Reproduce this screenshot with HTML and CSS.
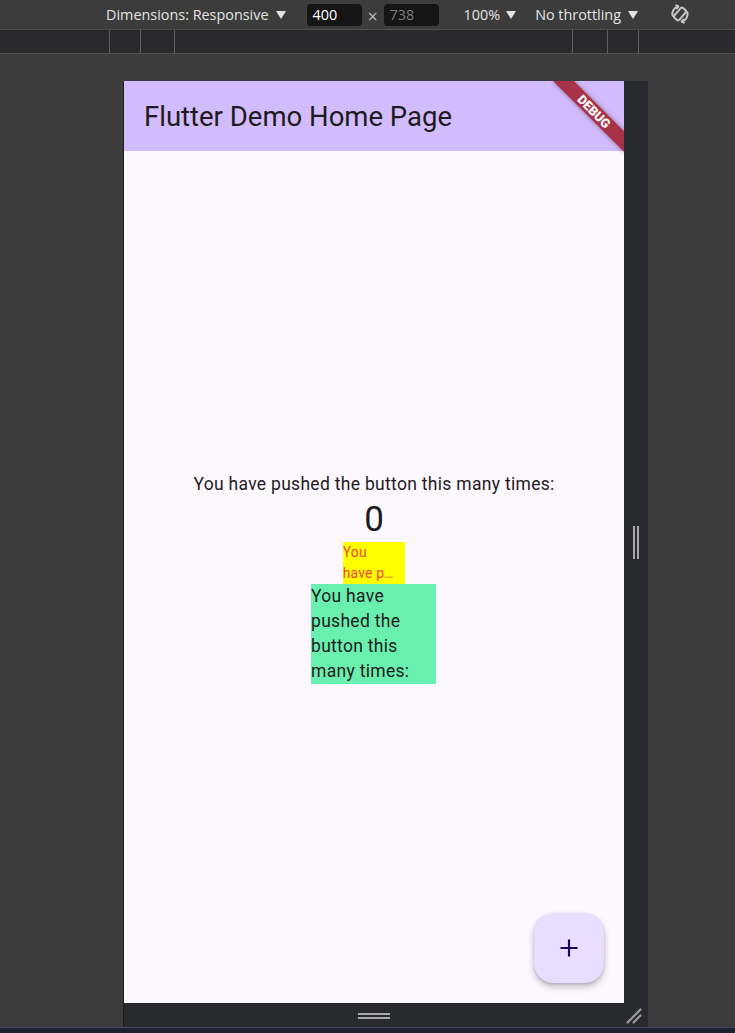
FILE: index.html
```html
<!DOCTYPE html>
<html lang="en">
<head>
<meta charset="utf-8">
<title>Flutter Demo Home Page</title>
<link rel="stylesheet" href="styles.css">
</head>
<body>
<div class="page">
  <div class="toolbar">
    <span class="tb-label">Dimensions: Responsive</span><span class="caret"></span>
    <span class="tb-input tb-w">400</span>
    <span class="times">×</span>
    <span class="tb-input tb-h">738</span>
    <span class="tb-label zoom">100%</span><span class="caret c-zoom"></span>
    <span class="tb-label throttle">No throttling</span><span class="caret"></span>
    <svg class="rotate" width="24" height="24" viewBox="0 0 24 24" fill="none" stroke="#c8c8c8" stroke-width="2" stroke-linecap="round">
      <rect x="8.7" y="5.5" width="6.6" height="13" rx="1.8" transform="rotate(40 12 12)"/>
      <path d="M4.6 13.8 A7.6 7.6 0 0 1 10.2 4.5"/>
      <path d="M10.2 4.5 L8.3 3.3 M10.2 4.5 L9 6.3"/>
      <path d="M19.4 10.2 A7.6 7.6 0 0 1 13.8 19.5"/>
      <path d="M13.8 19.5 L15.7 20.7 M13.8 19.5 L15 17.7"/>
    </svg>
  </div>
  <div class="rulers">
    <div class="r-seg r-a"></div>
    <div class="r-seg r-b"></div>
    <div class="r-seg r-c"></div>
    <div class="r-seg r-d"></div>
    <div class="r-seg r-e"></div>
    <div class="r-seg r-f"></div>
  </div>
  <div class="stage">
    <div class="device">
      <div class="screen">
        <header class="appbar">
          <h1 class="title">Flutter Demo Home Page</h1>
        </header>
        <main class="body">
          <p class="msg">You have pushed the button this many times:</p>
          <p class="counter">0</p>
          <div class="yellow"><span class="yl">You</span><span class="yl">have p…</span></div>
          <div class="green">You have pushed the button this many times:</div>
        </main>
        <button class="fab" aria-label="Increment">
          <svg width="30" height="30" viewBox="0 0 30 30"><path d="M15 6.5 V23.5 M6.5 15 H23.5" stroke="#21005d" stroke-width="2.2"/></svg>
        </button>
        <div class="banner"><span>DEBUG</span></div>
      </div>
      <div class="gutter-right"><span class="vbar"></span><span class="vbar"></span></div>
      <div class="gutter-bottom"><span class="hbar"></span><span class="hbar"></span></div>
      <div class="corner">
        <svg width="24" height="24" viewBox="0 0 24 24"><path d="M3.5 19.5 L16.5 6.5 M9.5 19.5 L16.5 12.5" stroke="#9c9c9c" stroke-width="2.2" stroke-linecap="round"/></svg>
      </div>
    </div>
  </div>
  <div class="taskbar"></div>
</div>
</body>
</html>
```
FILE: styles.css
```css
html, body {
  margin: 0;
  padding: 0;
}
body {
  background: #3c3c3c;
  font-family: "Open Sans", "Noto Sans", sans-serif;
}
.page {
  width: 735px;
  height: 1033px;
  display: flex;
  flex-direction: column;
  overflow: hidden;
}
.toolbar {
  height: 30px;
  flex: none;
  display: flex;
  align-items: center;
  padding-left: 106px;
  box-sizing: border-box;
  background: #3c3c3c;
  border-bottom: 1px solid #4e4e4e;
  color: #e3e3e3;
  font-size: 14.4px;
}
.tb-label {
  white-space: nowrap;
}
.caret {
  display: inline-block;
  width: 0;
  height: 0;
  border-left: 5px solid transparent;
  border-right: 5px solid transparent;
  border-top: 8px solid #e3e3e3;
  margin-left: 7px;
}
.c-zoom {
  margin-left: 6px;
}
.tb-input {
  width: 55px;
  height: 22px;
  box-sizing: border-box;
  background: #151515;
  border-radius: 4px;
  padding-left: 6px;
  line-height: 22px;
  font-size: 14.4px;
}
.tb-w {
  margin-left: 21px;
  color: #ffffff;
}
.times {
  width: 22px;
  text-align: center;
  color: #b8b8b8;
  font-size: 18px;
  line-height: 20px;
  margin-top: 3px;
}
.tb-h {
  color: #7d7d7d;
}
.zoom {
  margin-left: 25px;
}
.throttle {
  margin-left: 19px;
}
.rotate {
  margin-left: 30px;
  margin-top: -1px;
}
.rulers {
  height: 24px;
  flex: none;
  display: flex;
  padding-left: 109px;
  box-sizing: border-box;
  background: #2a2a2c;
  border-bottom: 1px solid #4e4e4e;
}
.r-seg {
  border-left: 1px solid #606060;
  height: 100%;
}
.r-a { width: 30px; }
.r-b { width: 33px; }
.r-c { width: 397px; }
.r-d { width: 34px; }
.r-e { width: 30px; }
.r-f { width: 20px; }
.stage {
  flex: 1;
  padding-top: 27px;
  padding-left: 123px;
}
.device {
  display: grid;
  grid-template-columns: 500px 24px;
  grid-template-rows: 922px 24px;
  width: 524px;
  border-left: 1px solid #1f1f1f;
  background: #292a2d;
}
.screen {
  position: relative;
  overflow: hidden;
  background: #fdf7ff;
  display: flex;
  flex-direction: column;
  font-family: Roboto, "Noto Sans", sans-serif;
  color: #1d1b20;
}
.appbar {
  height: 70px;
  flex: none;
  background: #d3bcfd;
  display: flex;
  align-items: center;
  padding-left: 20px;
}
.title {
  margin: 0;
  font-weight: 400;
  font-size: 27.5px;
  line-height: 35px;
  color: #1d1b20;
}
.body {
  flex: 1;
  display: flex;
  flex-direction: column;
  align-items: center;
  justify-content: center;
  padding-top: 2px;
}
.msg {
  margin: 0;
  font-size: 17.5px;
  line-height: 25px;
  letter-spacing: 0.3px;
}
.counter {
  margin: 0;
  font-size: 35px;
  line-height: 45px;
}
.yellow {
  width: 62.5px;
  background: #ffff00;
  color: #f44336;
  font-size: 13.75px;
  line-height: 21px;
  letter-spacing: 0.25px;
  display: flex;
  flex-direction: column;
}
.yl {
  white-space: nowrap;
}
.green {
  width: 125px;
  background: #69f0ae;
  font-size: 17.5px;
  line-height: 25px;
  letter-spacing: 0.3px;
  margin-left: -1px;
}
.fab {
  position: absolute;
  right: 20px;
  bottom: 20px;
  width: 70px;
  height: 70px;
  border: none;
  border-radius: 20px;
  background: #eaddff;
  box-shadow: 0 4px 7px rgba(0, 0, 0, 0.22), 0 1px 3px rgba(0, 0, 0, 0.15);
  display: flex;
  align-items: center;
  justify-content: center;
  padding: 0;
}
.banner {
  position: absolute;
  top: 23px;
  right: -19.5px;
  width: 100px;
  height: 15px;
  transform: rotate(45deg);
  background: rgba(160, 24, 36, 0.84);
  box-shadow: 0 0 5px rgba(0, 0, 0, 0.35);
  display: flex;
  align-items: center;
  justify-content: center;
  color: #ffffff;
  font-family: Roboto, "Noto Sans", sans-serif;
  font-weight: 900;
  font-size: 12.75px;
  line-height: 15px;
}
.gutter-right {
  display: flex;
  align-items: center;
  justify-content: center;
  gap: 2px;
  padding-right: 1px;
}
.vbar {
  width: 2px;
  height: 33px;
  background: #a8a8a8;
}
.gutter-bottom {
  display: flex;
  flex-direction: column;
  align-items: center;
  justify-content: center;
  gap: 2px;
  padding-top: 2px;
}
.hbar {
  width: 32px;
  height: 2px;
  background: #a8a8a8;
}
.corner {
  display: flex;
  align-items: flex-end;
  justify-content: flex-start;
}
.taskbar {
  height: 5px;
  flex: none;
  background: #1f2134;
  border-top: 1px solid #44485e;
}
```
